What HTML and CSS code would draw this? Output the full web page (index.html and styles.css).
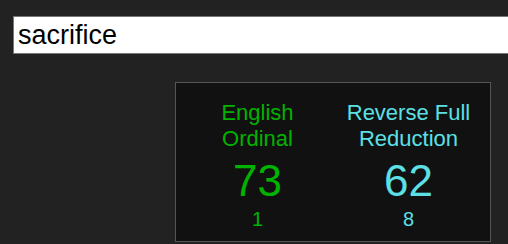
FILE: index.html
```html
<!DOCTYPE html>
<html lang="en">
<head>
    <meta charset="UTF-8">
    <meta name="viewport" content="width=device-width, initial-scale=1.0">
    <title>Gematria</title>
    <link rel="stylesheet" href="styles.css">
</head>
<body>
    <div class="search-row">
        <input type="text" class="phrase-input" value="sacrifice">
    </div>

    <div class="cipher-box">
        <div class="cipher-col ordinal">
            <div class="cipher-name">English<br>Ordinal</div>
            <div class="cipher-value">73</div>
            <div class="cipher-reduced">1</div>
        </div>
        <div class="cipher-col reverse">
            <div class="cipher-name">Reverse Full<br>Reduction</div>
            <div class="cipher-value">62</div>
            <div class="cipher-reduced">8</div>
        </div>
    </div>
</body>
</html>
```

FILE: styles.css
```css
body {
    margin: 0;
    padding: 16px 0 0 13px;
    background-color: #222;
    font-family: "Liberation Sans", Arial, sans-serif;
    overflow: hidden;
}
.phrase-input {
    display: block;
    width: 100%;
    height: 38px;
    box-sizing: border-box;
    padding: 2px 3px 2px 4px;
    margin: 0;
    border: 1px solid #767676;
    border-right: none;
    background: white;
    color: black;
    font-family: "Liberation Sans", Arial, sans-serif;
    font-size: 27px;
    outline: none;
}
.cipher-box {
    width: 316px;
    height: 160px;
    box-sizing: border-box;
    margin: 28px 0 0 162px;
    padding: 17px 6px 0;
    background-color: #111;
    border: 1px solid #555;
    display: grid;
    grid-template-columns: 151px 151px;
    justify-content: center;
    text-align: center;
}
.cipher-name {
    font-size: 22px;
    line-height: 26px;
    margin-bottom: 4px;
}
.cipher-value {
    font-size: 44px;
    line-height: 50px;
}
.cipher-reduced {
    font-size: 20px;
    line-height: 23px;
    margin-top: 2px;
}
.ordinal {
    color: #00b300;
}
.reverse {
    color: #5ce0e6;
}
```
